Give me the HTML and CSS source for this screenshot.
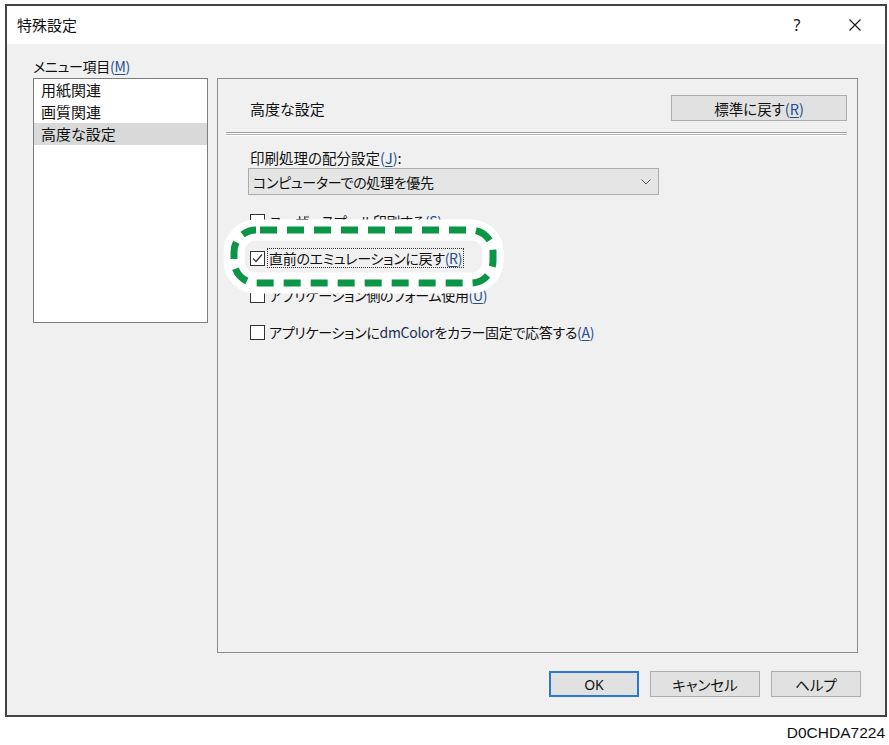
FILE: index.html
```html
<!DOCTYPE html>
<html lang="ja">
<head>
<meta charset="utf-8">
<title>特殊設定</title>
<link rel="stylesheet" href="styles.css">
</head>
<body>
<div class="page">
  <div class="window">
    <div class="titlebar">
      <span class="title">特殊設定</span>
      <span class="help">?</span>
      <span class="close"><svg width="14" height="14" viewBox="0 0 14 14"><path d="M1.5 1.5 L12.5 12.5 M12.5 1.5 L1.5 12.5" stroke="#1a1a1a" stroke-width="1.2" fill="none"/></svg></span>
    </div>
    <div class="dlg-body">
      <div class="main">
        <div class="leftcol">
          <div class="menu-label">メニュー項目<span class="ak">(<u>M</u>)</span></div>
          <ul class="list">
            <li>用紙関連</li>
            <li>画質関連</li>
            <li class="sel">高度な設定</li>
          </ul>
        </div>
        <div class="panel">
          <div class="panel-head">
            <span class="panel-title">高度な設定</span>
            <div class="btn reset">標準に戻す<span class="ak">(<u>R</u>)</span></div>
          </div>
          <div class="sep"></div>
          <div class="field-label">印刷処理の配分設定<span class="ak">(<u>J</u>)</span>:</div>
          <div class="select">
            <span>コンピューターでの処理を優先</span>
            <svg width="10" height="6" viewBox="0 0 10 6"><path d="M0.5 0.5 L5 5 L9.5 0.5" stroke="#555" stroke-width="1" fill="none"/></svg>
          </div>
          <div class="checks">
            <div class="check"><span class="box"></span><span class="ctext">ユーザースプール印刷する<span class="ak">(<u>S</u>)</span></span></div>
            <div class="check"><span class="box checked"><svg width="13" height="13" viewBox="0 0 13 13"><path d="M2 6.5 L5 9.5 L11 2.5" stroke="#333" stroke-width="1.2" fill="none"/></svg></span><span class="ctext focus">直前のエミュレーションに戻す<span class="ak">(<u>R</u>)</span></span></div>
            <div class="check"><span class="box"></span><span class="ctext">アプリケーション側のフォーム使用<span class="ak">(<u>U</u>)</span></span></div>
            <div class="check"><span class="box"></span><span class="ctext">アプリケーションに<span class="latin">dmColor</span>をカラー固定で応答する<span class="ak">(<u>A</u>)</span></span></div>
          </div>
        </div>
      </div>
      <div class="buttons">
        <div class="btn default">OK</div>
        <div class="btn wide">キャンセル</div>
        <div class="btn">ヘルプ</div>
      </div>
    </div>
  </div>
  <div class="code">D0CHDA7224</div>
  <svg class="annot" width="889" height="745" viewBox="0 0 889 745">
    <rect x="234" y="230" width="259" height="53" rx="22" ry="22" fill="none" stroke="#ffffff" stroke-width="21"/>
    <rect x="234" y="230" width="259" height="53" rx="22" ry="22" fill="none" stroke="#0a9547" stroke-width="7" stroke-dasharray="17 10" stroke-dashoffset="-4"/>
  </svg>
</div>
</body>
</html>
```
FILE: styles.css
```css
html, body {
  margin: 0;
  padding: 0;
  background: #ffffff;
}
body {
  font-family: "Noto Sans CJK JP", "Noto Sans", sans-serif;
  font-feature-settings: "palt";
  font-size: 15px;
  color: #111;
}
.page {
  position: relative;
  width: 889px;
  height: 745px;
  overflow: hidden;
}
.window {
  box-sizing: border-box;
  margin: 4px 0 0 5px;
  width: 882px;
  height: 713px;
  border: 2px solid #444;
  background: #f0f0f0;
  display: flex;
  flex-direction: column;
}
.titlebar {
  height: 38px;
  background: #ffffff;
  display: flex;
  align-items: center;
  padding: 0 23px 0 10px;
}
.title {
  font-size: 15px;
  line-height: 20px;
}
.help {
  margin-left: auto;
  width: 12px;
  text-align: center;
  font-family: "Noto Sans", sans-serif;
  font-size: 16px;
  line-height: 20px;
}
.close {
  margin-left: 45px;
  width: 14px;
  height: 14px;
  display: flex;
}
.dlg-body {
  flex: 1;
  display: flex;
  flex-direction: column;
}
.main {
  display: flex;
  gap: 9px;
  padding: 0 27px 0 26px;
}
.leftcol {
  width: 175px;
  flex: none;
}
.menu-label {
  margin: 12px 0 2px;
  line-height: 20px;
  font-size: 14px;
  letter-spacing: -0.3px;
}
.ak {
  color: #1f4f8f;
}
.ak u {
  text-decoration-thickness: 1px;
  text-underline-offset: 2px;
}
.list {
  box-sizing: border-box;
  list-style: none;
  margin: 0;
  padding: 0;
  height: 245px;
  background: #ffffff;
  border: 1px solid #7d7d7d;
}
.list li {
  line-height: 22px;
  padding-left: 7px;
}
.list li.sel {
  background: #d9d9d9;
}
.panel {
  box-sizing: border-box;
  width: 641px;
  height: 575px;
  margin-top: 34px;
  border: 1px solid #8c8c8c;
  padding: 16px 10px 0 8px;
}
.panel-head {
  display: flex;
  align-items: center;
  justify-content: space-between;
  padding-left: 24px;
  height: 26px;
}
.btn {
  box-sizing: border-box;
  height: 26px;
  width: 90px;
  background: #e1e1e1;
  border: 1px solid #adadad;
  display: flex;
  align-items: center;
  justify-content: center;
  font-size: 14.5px;
}
.btn.reset {
  width: 176px;
}
.btn.wide {
  width: 110px;
}
.btn.default {
  border: 2px solid #2a78d2;
  font-family: "Noto Sans", sans-serif;
  font-size: 14px;
}
.sep {
  height: 4px;
  margin-top: 11px;
  background: linear-gradient(#a0a0a0 0 1px, #ffffff 1px 2px, #b4b4b4 2px 3px, #ffffff 3px 4px);
}
.field-label {
  margin: 12px 0 0 24px;
  line-height: 20px;
  font-size: 14.5px;
}
.select {
  box-sizing: border-box;
  margin-left: 22px;
  width: 411px;
  height: 27px;
  background: #e5e5e5;
  border: 1px solid #adadad;
  display: flex;
  align-items: center;
  justify-content: space-between;
  padding: 0 7px 0 4px;
  font-size: 14px;
  letter-spacing: -0.3px;
}
.checks {
  display: flex;
  flex-direction: column;
  gap: 17px;
  margin: 16px 0 0 24px;
}
.check {
  display: flex;
  align-items: center;
  height: 20px;
}
.box {
  box-sizing: border-box;
  width: 15px;
  height: 15px;
  border: 1px solid #333;
  background: #ffffff;
  display: flex;
  align-items: center;
  justify-content: center;
  flex: none;
}
.ctext {
  margin-left: 2px;
  padding: 0 1px;
  border: 1px dotted transparent;
  line-height: 18px;
  font-size: 14px;
  letter-spacing: -0.3px;
}
.ctext.focus {
  border-color: #333;
}
.latin {
  color: #1c2f55;
}
.buttons {
  display: flex;
  justify-content: flex-end;
  gap: 11px;
  margin-top: 18px;
  padding-right: 24px;
}
.code {
  margin-top: 7px;
  padding-right: 4px;
  text-align: right;
  font-family: "Liberation Sans", Arial, sans-serif;
  font-size: 15.5px;
  line-height: 18px;
  color: #111;
}
.annot {
  position: absolute;
  left: 0;
  top: 0;
  pointer-events: none;
}
```
